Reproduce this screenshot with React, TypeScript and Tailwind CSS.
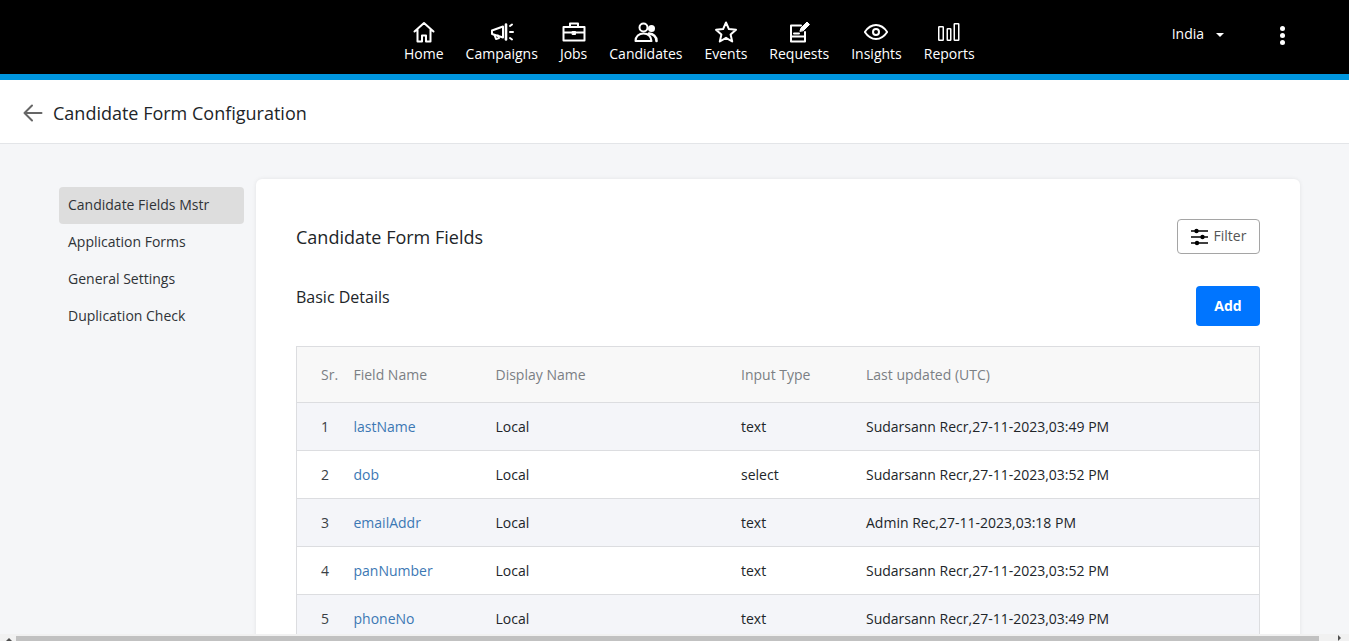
import React from "react";

const Nav = ({ label, children }: { label: string; children: React.ReactNode }) => (
  <a className="flex flex-col items-center text-white text-[14px] leading-[19px]">
    <span className="h-[24px] flex items-center justify-center">{children}</span>
    <span>{label}</span>
  </a>
);

const S = ({ children }: { children: React.ReactNode }) => (
  <svg width={24} height={24} viewBox="0 0 24 24" fill="none" stroke="white" strokeWidth="2" strokeLinejoin="round" strokeLinecap="round">
    {children}
  </svg>
);

const rows = [
  ["1", "lastName", "Local", "text", "Sudarsann Recr,27-11-2023,03:49 PM"],
  ["2", "dob", "Local", "select", "Sudarsann Recr,27-11-2023,03:52 PM"],
  ["3", "emailAddr", "Local", "text", "Admin Rec,27-11-2023,03:18 PM"],
  ["4", "panNumber", "Local", "text", "Sudarsann Recr,27-11-2023,03:52 PM"],
  ["5", "phoneNo", "Local", "text", "Sudarsann Recr,27-11-2023,03:49 PM"],
];

export default function App() {
  return (
    <div className="h-screen flex flex-col overflow-hidden bg-[#f5f6f8] font-['Open_Sans',sans-serif] text-[14px] text-[#212529]">
      <header className="h-[80px] shrink-0 bg-black border-b-[6px] border-[#0096df] flex items-start">
        <nav className="ml-[404px] mt-[20px] flex gap-[22px]">
          <Nav label="Home">
            <S><path d="M2.500 11.500 12 3l9.500 8.500M5.500 9.500V21.500h4.500v-6h4v6h4.500V9.500" /></S>
          </Nav>
          <Nav label="Campaigns">
            <S>
              <path d="M2 10.500 13 6.500v11L2 14z" />
              <path d="M16 4.500v15" strokeWidth="2.600" />
              <path d="M4.500 15l1.500 4 3-1-1-2.500" />
              <path d="M20 6l2-1.500M20 12h3M20 18l2 1.500" />
            </S>
          </Nav>
          <Nav label="Jobs">
            <S>
              <path d="M1.500 7h21v13.500h-21zM8 7V3.500h8V7M1.500 12.500h21" />
              <rect x="10.500" y="11.500" width="3" height="3" fill="white" strokeWidth="1" />
            </S>
          </Nav>
          <Nav label="Candidates">
            <S>
              <circle cx="9.500" cy="7.500" r="4" />
              <circle cx="17.500" cy="8.500" r="3.500" fill="white" stroke="none" />
              <path d="M15 13.500c4 .5 7.500 3 7.500 7.500" strokeWidth="2.600" />
              <path d="M1.500 21c0-4.500 3.500-7.500 8-7.500s7.500 3 8 7.500z" />
            </S>
          </Nav>
          <Nav label="Events">
            <S><path d="M12 2.500l2.900 6.600 7.100.7-5.400 4.700 1.600 7-6.200-3.700-6.200 3.700 1.600-7L2 9.800l7.100-.7z" /></S>
          </Nav>
          <Nav label="Requests">
            <S>
              <path d="M14 5.500H4v16h14V12" />
              <path d="M7 13.500h5M4 16.500h14" />
              <path d="M13 11l1-3 6-6 2.500 2.500-6 6z" fill="white" strokeWidth="1" />
            </S>
          </Nav>
          <Nav label="Insights">
            <S>
              <path d="M.800 12c3-4.500 7-7 11.200-7s8.200 2.500 11.200 7c-3 4.500-7 7-11.200 7s-8.200-2.500-11.200-7z" />
              <circle cx="12" cy="12" r="3" />
            </S>
          </Nav>
          <Nav label="Reports">
            <svg width={24} height={24} viewBox="0 0 24 24" fill="none" stroke="white" strokeWidth="1.500">
              <rect x="1.750" y="6.750" width="4.500" height="13.500" rx=".5" />
              <rect x="10.250" y="8.750" width="3.500" height="11.500" rx=".5" />
              <rect x="17.250" y="3.750" width="4.500" height="16.500" rx=".5" />
            </svg>
          </Nav>
        </nav>
        <div className="ml-[197px] mt-[25px] flex items-center text-white text-[14px] leading-[18px]">
          India
          <span className="ml-[12px] mt-[2px] w-0 h-0 border-x-[4px] border-x-transparent border-t-[4px] border-t-white" />
        </div>
        <div className="ml-[56px] mt-[26px] flex flex-col gap-[2px]">
          <span className="w-[5px] h-[5px] rounded-full bg-white" />
          <span className="w-[5px] h-[5px] rounded-full bg-white" />
          <span className="w-[5px] h-[5px] rounded-full bg-white" />
        </div>
      </header>

      <div className="h-[64px] shrink-0 bg-white border-b border-[#e3e5e8] flex items-center pl-[23px] pt-[2px]">
        <svg width="20" height="18" viewBox="0 0 20 18" fill="none" stroke="#666" strokeWidth="2" strokeLinecap="round" strokeLinejoin="round">
          <path d="M18.500 9H1.500M9 1.500 1.500 9 9 16.500" />
        </svg>
        <h1 className="ml-[10px] text-[18px] font-medium leading-[24px] text-[#212529]">Candidate Form Configuration</h1>
      </div>

      <main className="flex-1 min-h-0 overflow-hidden flex pl-[59px] pt-[35px]">
        <aside className="w-[185px] shrink-0 mt-[8px] text-[14px] font-medium text-[#2f3337]">
          <div className="h-[37px] rounded-[4px] bg-[#dddddd] pl-[9px] pb-[2px] flex items-center">Candidate Fields Mstr</div>
          <div className="h-[37px] pl-[9px] pb-[2px] flex items-center">Application Forms</div>
          <div className="h-[37px] pl-[9px] pb-[2px] flex items-center">General Settings</div>
          <div className="h-[37px] pl-[9px] pb-[2px] flex items-center">Duplication Check</div>
        </aside>
        <section className="ml-[12px] w-[1044px] h-[600px] shrink-0 bg-white rounded-[6px] shadow-[0_0_4px_rgba(0,0,0,0.08)] px-[40px] pt-[40px]">
          <div className="flex items-start justify-between h-[35px]">
            <h2 className="text-[18px] font-medium leading-[37px] text-[#212529]">Candidate Form Fields</h2>
            <button className="w-[83px] h-[35px] border border-[#a5a5a5] rounded-[4px] pb-[2px] flex items-center justify-center gap-[6px] text-[#555]">
              <svg width="17" height="18" viewBox="0 0 17 18" stroke="black" strokeWidth="1.500" fill="black" className="mt-[2px]">
                <path d="M0 3h17M0 9h17M0 15h17" />
                <circle cx="5.500" cy="3" r="2.200" stroke="none" />
                <circle cx="11.500" cy="9" r="2.200" stroke="none" />
                <circle cx="6" cy="15" r="2.200" stroke="none" />
              </svg>
              Filter
            </button>
          </div>
          <div className="flex items-start justify-between mt-[32px] h-[40px]">
            <h3 className="text-[16px] font-medium leading-[24px] text-[#212529] -mt-[1px]">Basic Details</h3>
            <button className="w-[64px] h-[40px] rounded-[4px] bg-[#0075ff] pb-[2px] text-white font-bold text-[14px]">Add</button>
          </div>
          <table className="mt-[20px] w-[964px] table-fixed border-collapse border border-[#dcdde0] text-[14px]">
            <colgroup>
              <col className="w-[57px]" />
              <col className="w-[142px]" />
              <col className="w-[245.5px]" />
              <col className="w-[125px]" />
              <col />
            </colgroup>
            <thead>
              <tr className="h-[56px] bg-[#f8f8f8] text-[#7b7f84] text-left border-b border-[#dcdde0]">
                <th className="font-normal pl-[24px]">Sr.</th>
                <th className="font-normal">Field Name</th>
                <th className="font-normal">Display Name</th>
                <th className="font-normal">Input Type</th>
                <th className="font-normal">Last updated (UTC)</th>
              </tr>
            </thead>
            <tbody>
              {rows.map((r, i) => (
                <tr key={r[0]} className={`h-[48px] border-b border-[#dcdde0] ${i % 2 === 0 ? "bg-[#f4f5f9]" : "bg-white"}`}>
                  <td className="pl-[24px] text-[#3a3f44]">{r[0]}</td>
                  <td className="text-[#3c78b4]">{r[1]}</td>
                  <td>{r[2]}</td>
                  <td>{r[3]}</td>
                  <td>{r[4]}</td>
                </tr>
              ))}
            </tbody>
          </table>
        </section>
      </main>

      <div className="h-[7px] shrink-0 bg-[#f1f1f1] flex items-end justify-between relative">
        <span className="ml-[6px] w-0 h-0 border-x-[3px] border-x-transparent border-b-[3px] border-b-[#505050]" />
        <div className="absolute left-[16px] bottom-0 h-[5px] w-[1303px] bg-[#c1c1c1]" />
        <span className="mr-[8px] w-0 h-0 border-y-[3px] border-y-transparent border-l-[3px] border-l-[#505050]" />
      </div>
    </div>
  );
}
